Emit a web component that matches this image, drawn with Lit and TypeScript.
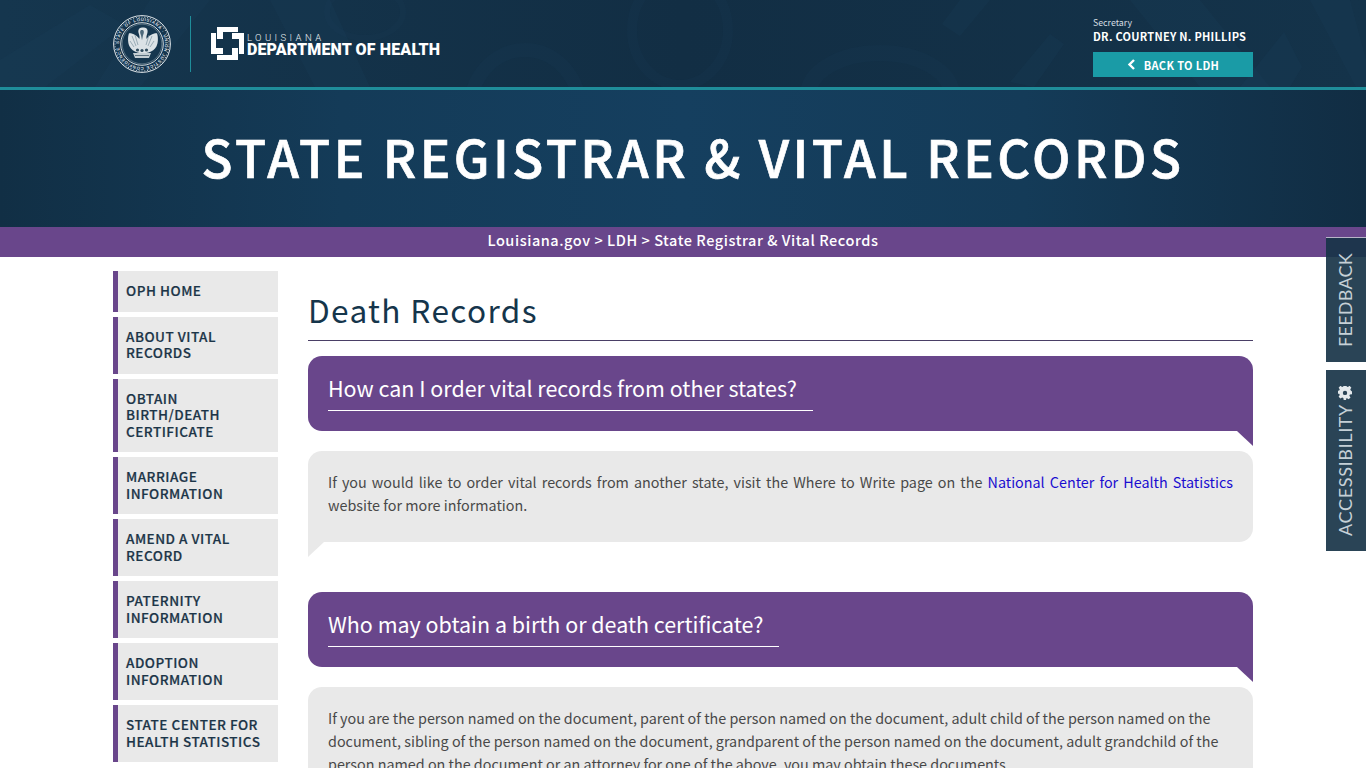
import { LitElement, html, css, svg } from "lit";
import { customElement } from "lit/decorators.js";

const NAV = [
  "OPH HOME",
  "ABOUT VITAL RECORDS",
  "OBTAIN BIRTH/DEATH CERTIFICATE",
  "MARRIAGE INFORMATION",
  "AMEND A VITAL RECORD",
  "PATERNITY INFORMATION",
  "ADOPTION INFORMATION",
  "STATE CENTER FOR HEALTH STATISTICS",
];

@customElement("app-root")
export class AppRoot extends LitElement {
  static styles = css`
    :host {
      display: block;
      height: 768px;
      overflow: hidden;
      position: relative;
      font-family: "Noto Sans CJK SC", "Noto Sans", sans-serif;
      background: #fff;
      color: #333;
    }
    * { box-sizing: border-box; }
    .top {
      height: 90px;
      background: linear-gradient(90deg, #15364e 0%, #122e44 50%, #14334a 100%);
      border-bottom: 3px solid #1f8d9a;
      position: relative;
      overflow: hidden;
    }
    .deco { position: absolute; inset: 0; width: 100%; height: 87px; }
    .top-inner {
      position: relative;
      width: 1140px;
      height: 87px;
      margin: 0 auto;
      display: flex;
      align-items: flex-start;
      justify-content: space-between;
    }
    .brand { display: flex; align-items: center; height: 87px; }
    .seal { width: 58px; height: 58px; display: block; }
    .sep { width: 1px; height: 56px; background: #1f8d9a; margin: 0 20px 0 19px; }
    .cross { width: 33px; height: 33px; display: block; }
    .lockup { display: flex; flex-direction: column; margin-left: 3px; margin-top: 2px; font-family: "Roboto", sans-serif; color: #fff; }
    .lockup .la { font-size: 9.5px; line-height: 9px; letter-spacing: 3.4px; font-weight: 300; color: #e8eef2; }
    .lockup .dep { font-size: 16px; line-height: 15px; font-weight: 900; letter-spacing: 0.15px; white-space: nowrap; }
    .sec { width: 160px; padding-top: 16px; }
    .sec .t { font-size: 8.8px; line-height: 14px; height: 12px; color: #d5dde2; }
    .sec .n { font-size: 11px; line-height: 16px; height: 16px; font-weight: 700; color: #fff; letter-spacing: 0.26px; white-space: nowrap; }
    .back {
      height: 25px;
      margin-top: 8px;
      background: #1a9ba6;
      color: #fff;
      font-size: 11px;
      font-weight: 700;
      letter-spacing: 0.35px;
      display: flex;
      align-items: center;
      justify-content: center;
      gap: 8px;
    }
    .back svg { width: 9px; height: 11px; display: block; }
    .banner {
      height: 137px;
      background: linear-gradient(90deg, #112f45 0%, #143b58 25%, #153f5f 50%, #143b58 75%, #112d43 100%);
      display: flex;
      align-items: center;
      justify-content: center;
      padding: 0 0 6px 20px;
    }
    .banner h2 {
      margin: 0;
      font-size: 51px;
      line-height: 70px;
      font-weight: 500;
      color: #fff;
      -webkit-text-stroke: 0.7px #fff;
      letter-spacing: 3.5px;
      white-space: nowrap;
    }
    .crumb {
      height: 30px;
      background: #69468b;
      color: #fff;
      display: flex;
      align-items: center;
      justify-content: center;
      padding-bottom: 5px;
      font-size: 14.5px;
      font-weight: 500;
      letter-spacing: 0.55px;
    }
    .wrap {
      width: 1140px;
      margin: 0 auto;
      display: flex;
      gap: 30px;
      align-items: flex-start;
      padding-top: 14px;
    }
    nav { width: 165px; flex: none; display: flex; flex-direction: column; gap: 5px; }
    nav a {
      display: block;
      background: #e9e9e9;
      border-left: 5px solid #69468b;
      padding: 11px 13px 13px 8px;
      font-size: 13.5px;
      line-height: 16.5px;
      font-weight: 500;
      -webkit-text-stroke: 0.2px #1c3548;
      letter-spacing: 0.5px;
      color: #1c3548;
    }
    main { flex: 1; min-width: 0; }
    h1 {
      margin: 0;
      height: 70px;
      padding-top: 15px;
      border-bottom: 1px solid #4a3f66;
      font-size: 31.6px;
      line-height: 46px;
      font-weight: 400;
      letter-spacing: 1.35px;
      color: #15354b;
      white-space: nowrap;
    }
    .q {
      position: relative;
      margin-top: 15px;
      height: 75px;
      background: #69468b;
      border-radius: 14px 14px 0 14px;
      padding: 17px 20px 0;
    }
    .q::after {
      content: "";
      position: absolute;
      right: 0;
      bottom: -15px;
      width: 16px;
      height: 15px;
      background: #69468b;
      clip-path: polygon(0 0, 100% 0, 100% 100%);
    }
    .q span {
      display: inline-block;
      color: #fff;
      font-size: 21.46px;
      line-height: 30px;
      padding-bottom: 7px;
      padding-right: 16px;
      border-bottom: 1px solid #fff;
      white-space: nowrap;
    }
    .a {
      position: relative;
      margin-top: 20px;
      background: #e9e9e9;
      border-radius: 14px 14px 14px 0;
      padding: 19px 20px 26px;
      font-size: 14.35px;
      line-height: 23px;
      color: #484848;
    }
    .a::after {
      content: "";
      position: absolute;
      left: 0;
      bottom: -15px;
      width: 16px;
      height: 15px;
      background: #e9e9e9;
      clip-path: polygon(0 0, 100% 0, 0 100%);
    }
    .a p { margin: 0; }
    .a .just { text-align: justify; }
    .a a { color: #1a0dd0; text-decoration: none; }
    .gap { height: 35px; }
    .tabs { position: absolute; right: 0; top: 237px; width: 40px; display: flex; flex-direction: column; gap: 8px; }
    .tab {
      width: 40px;
      background: rgba(24, 52, 72, 0.92);
      border-top: 1px solid #b8b4c8;
      color: #c6d0d6;
      display: flex;
      align-items: center;
      justify-content: center;
      padding-right: 2px;
      font-size: 18px;
      font-family: "Lato", sans-serif;
      white-space: nowrap;
    }
    .tab.fb { height: 125px; }
    .tab.ac { height: 181px; border-top: none; }
    .tab span {
      writing-mode: vertical-rl;
      transform: rotate(180deg);
      display: flex;
      align-items: center;
      gap: 4px;
      line-height: 24px;
    }
    .tab.fb span { letter-spacing: 0.25px; }
    .tab.ac span { letter-spacing: 0.65px; }
    .tab svg { width: 14px; height: 14px; display: block; }
  `;

  private seal() {
    const dots = [];
    for (let i = 0; i < 60; i++) {
      const a = (i / 60) * Math.PI * 2;
      dots.push(svg`<circle cx=${29 + 27 * Math.cos(a)} cy=${29 + 27 * Math.sin(a)} r="0.55" fill="#cfd8de"/>`);
    }
    return html`<svg class="seal" viewBox="0 0 58 58" aria-label="Seal of Louisiana">
      <defs><path id="ring" d="M29 29 m-23 0 a23 23 0 1 1 46 0 a23 23 0 1 1 -46 0"/></defs>
      <circle cx="29" cy="29" r="28.400" fill="none" stroke="#dfe5e9" stroke-width="1"/>
      ${dots}
      <text font-size="4.300" fill="#d4dce1" font-family="Liberation Sans" font-weight="700"><textPath href="#ring" textLength="140" lengthAdjust="spacing">STATE OF LOUISIANA · UNION JUSTICE CONFIDENCE</textPath></text>
      <circle cx="29" cy="29" r="21.300" fill="none" stroke="#d3dbe0" stroke-width="1"/>
      <circle cx="29" cy="29" r="19.800" fill="none" stroke="#8fa2ae" stroke-width=".5"/>
      <path d="M29 12.500c-3 0-4.200 2.800-3.400 5.600.5 2 1.500 3.800.7 5.900-2-3.400-6.200-5.900-10.300-5.700-1.300 3.600-1.300 9.700.6 13.200 1.600 3 4.300 5 7.800 6l5.600 1.300 5.600-1.300c3.500-1 6.200-3 7.800-6 1.900-3.500 1.900-9.600.6-13.200-4.100-.2-8.300 2.300-10.300 5.700-.8-2.100.2-3.900.7-5.900.8-2.800-.4-5.600-3.400-5.600z" fill="#dbe2e6"/>
      <path d="M28 15c-1.300 1-1 3.200 0 5.200l1 5 1-5c1-2 1.300-4.200 0-5.200z" fill="#4c687a"/>
      <path d="M19 21l4 10M22 20l3 10M39 21l-4 10M36 20l-3 10M17 26l4 6M41 26l-4 6" stroke="#7c93a1" stroke-width=".7" fill="none"/>
      <path d="M20 38h18l-2 5H22z" fill="#c4ced4"/>
      <circle cx="24.500" cy="35" r="1.600" fill="#2f4b5e"/><circle cx="33.500" cy="35" r="1.600" fill="#2f4b5e"/><circle cx="29" cy="35.500" r="1.600" fill="#2f4b5e"/>
      <path d="M22 40.500h14" stroke="#41596a" stroke-width=".8"/>
    </svg>`;
  }

  render() {
    const piece = "M6 0H27V5H12V12H6Z";
    return html`
      <div class="top">
        <svg class="deco" viewBox="0 0 1366 87" preserveAspectRatio="none" aria-hidden="true">
          <g fill="#1b4059" fill-opacity=".22">
            <path d="M0 60L90 5 125 25 45 87H0z"/>
            <path d="M150 0h60l-70 87H95z"/>
            <path d="M270 0h60l40 87h-55z"/>
            <path d="M960 0h30l-30 36-18-12z"/>
            <path d="M1010 82l40-48 14 10-30 43z"/>
            <path d="M1130 0h70l70 87h-70z"/>
            <path d="M1240 87l44-55 18 35-12 20z"/>
            <path d="M1310 0h40l16 60v27h-10z"/>
          </g>
          <g fill="none" stroke="#1b4059" stroke-opacity=".14">
            <ellipse cx="365" cy="12" rx="38" ry="26" stroke-width="6"/>
            <ellipse cx="680" cy="30" rx="48" ry="55" stroke-width="10"/>
            <ellipse cx="525" cy="110" rx="55" ry="60" stroke-width="14"/>
            <ellipse cx="880" cy="95" rx="72" ry="42" stroke-width="16"/>
          </g>
        </svg>
        <div class="top-inner">
          <div class="brand">
            ${this.seal()}
            <div class="sep"></div>
            <svg class="cross" viewBox="0 0 33 33" aria-hidden="true">
              <g fill="#fff">
                <path d=${piece}/>
                <path d=${piece} transform="rotate(90 16.500 16.500)"/>
                <path d=${piece} transform="rotate(180 16.500 16.500)"/>
                <path d=${piece} transform="rotate(270 16.500 16.500)"/>
              </g>
            </svg>
            <div class="lockup">
              <span class="la">LOUISIANA</span>
              <span class="dep">DEPARTMENT OF HEALTH</span>
            </div>
          </div>
          <div class="sec">
            <div class="t">Secretary</div>
            <div class="n">DR. COURTNEY N. PHILLIPS</div>
            <div class="back">
              <svg viewBox="0 0 9 11" aria-hidden="true"><path d="M7 1L2.500 5.500 7 10" fill="none" stroke="#fff" stroke-width="2.400"/></svg>
              BACK TO LDH
            </div>
          </div>
        </div>
      </div>
      <div class="banner"><h2>STATE REGISTRAR &amp; VITAL RECORDS</h2></div>
      <div class="crumb">Louisiana.gov &gt; LDH &gt; State Registrar &amp; Vital Records</div>
      <div class="wrap">
        <nav>${NAV.map((n) => html`<a>${n}</a>`)}</nav>
        <main>
          <h1>Death Records</h1>
          <div class="q"><span>How can I order vital records from other states?</span></div>
          <div class="a">
            <p class="just">If you would like to order vital records from another state, visit the Where to Write page on the <a>National Center for Health Statistics</a> website for more information.</p>
          </div>
          <div class="gap"></div>
          <div class="q"><span>Who may obtain a birth or death certificate?</span></div>
          <div class="a">
            <p>If you are the person named on the document, parent of the person named on the document, adult child of the person named on the document, sibling of the person named on the document, grandparent of the person named on the document, adult grandchild of the person named on the document or an attorney for one of the above, you may obtain these documents.</p>
          </div>
        </main>
      </div>
      <div class="tabs">
        <div class="tab fb"><span>FEEDBACK</span></div>
        <div class="tab ac"><span>ACCESSIBILITY
          <svg viewBox="0 0 16 16" aria-hidden="true"><path fill="#e4e9ec" fill-rule="evenodd" d="M6.500 0h3l.4 2.200 1.400.6 1.900-1.300 2.100 2.100-1.300 1.900.6 1.400 2.400.4v3l-2.400.4-.6 1.400 1.300 1.900-2.100 2.100-1.900-1.300-1.400.6-.4 2.400h-3l-.4-2.400-1.400-.6-1.900 1.300-2.100-2.100 1.300-1.900-.6-1.400L0 9.500v-3l2.400-.4.6-1.400-1.300-1.900 2.100-2.100 1.900 1.300 1.400-.6zM8 5.500a2.500 2.500 0 1 0 0 5 2.500 2.500 0 0 0 0-5z"/></svg>
        </span></div>
      </div>
    `;
  }
}
